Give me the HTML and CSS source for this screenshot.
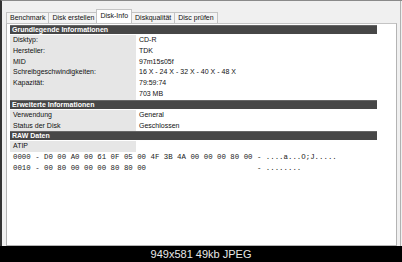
FILE: index.html
```html
<!DOCTYPE html>
<html lang="de">
<head>
    <meta charset="UTF-8">
    <title>Disk-Info</title>
    <link rel="stylesheet" href="styles.css">
</head>
<body>
    <div class="shot">
        <div class="window">
            <div class="tabs">
                <span class="tab">Benchmark</span>
                <span class="tab">Disk erstellen</span>
                <span class="tab active">Disk-Info</span>
                <span class="tab">Diskqualität</span>
                <span class="tab">Disc prüfen</span>
            </div>
            <div class="panel">
                <div class="info">
                    <div class="head">Grundlegende Informationen</div>
                    <div class="row"><span class="key">Disktyp:</span><span class="val">CD-R</span></div>
                    <div class="row"><span class="key">Hersteller:</span><span class="val">TDK</span></div>
                    <div class="row"><span class="key">MID</span><span class="val">97m15s05f</span></div>
                    <div class="row"><span class="key">Schreibgeschwindigkeiten:</span><span class="val">16 X - 24 X - 32 X - 40 X - 48 X</span></div>
                    <div class="row"><span class="key">Kapazität:</span><span class="val">79:59:74</span></div>
                    <div class="row"><span class="key"></span><span class="val">703 MB</span></div>

                    <div class="head">Erweiterte Informationen</div>
                    <div class="row"><span class="key">Verwendung</span><span class="val">General</span></div>
                    <div class="row"><span class="key">Status der Disk</span><span class="val">Geschlossen</span></div>

                    <div class="head">RAW Daten</div>
                    <div class="row"><span class="key">ATIP</span><span class="val"></span></div>
                    <pre class="hex">0000 - D0 00 A0 00 61 0F 05 00 4F 3B 4A 00 00 00 80 00 - ....a...O;J.....
0010 - 00 80 00 00 00 80 80 00                         - ........</pre>
                </div>
            </div>
        </div>
    </div>
    <div class="caption">949x581 49kb JPEG</div>
</body>
</html>
```

FILE: styles.css
```css
* {
    margin: 0;
    padding: 0;
    box-sizing: border-box;
}

body {
    width: 402px;
    height: 262px;
    background: #000;
    font-family: 'Liberation Sans', Arial, sans-serif;
    font-size: 7px;
    color: #111;
    overflow: hidden;
}

.shot {
    height: 246px;
    background: #f0f0f0;
    border-left: 2px solid #333;
    border-top: 1px solid #8a8a8a;
    padding: 0 1px 0 4px;
}

.window {
    height: 100%;
    border-right: 1px solid #b0b0b0;
    padding-top: 9px;
    padding-right: 3px;
    display: flex;
    flex-direction: column;
}

.tabs {
    display: flex;
    align-items: flex-end;
    height: 13px;
    position: relative;
    z-index: 1;
}

.tab {
    height: 11px;
    line-height: 10px;
    padding: 0 3px;
    border: 1px solid #c4c4c4;
    border-bottom: none;
    border-right: none;
    background: #f4f4f4;
}

.tab:nth-child(5) {
    border-right: 1px solid #c4c4c4;
}

.tab.active {
    height: 14px;
    line-height: 12px;
    background: #fff;
    margin: 0 -1px;
    border-right: 1px solid #c4c4c4;
    position: relative;
}

.panel {
    flex: 1;
    background: #fff;
    border: 1px solid #b4b4b4;
    border-top-color: #c4c4c4;
    padding: 1px 19px 0 3px;
}

.head {
    height: 9px;
    margin-bottom: 1px;
    background: #474747;
    border-top: 1px solid #666;
    color: #fff;
    font-weight: bold;
    line-height: 8px;
    padding-left: 2px;
}

.row {
    display: flex;
    height: 10.8px;
    line-height: 10.8px;
}

.key {
    width: 126px;
    background: #e6e6e6;
    padding-left: 3px;
}

.val {
    padding-left: 3px;
}

.hex {
    font-family: 'Liberation Mono', 'Courier New', monospace;
    font-size: 7.4px;
    line-height: 10.8px;
    padding-left: 3px;
    color: #222;
}

.caption {
    height: 16px;
    line-height: 16px;
    text-align: center;
    color: #e8e8e8;
    font-size: 11px;
}
```
